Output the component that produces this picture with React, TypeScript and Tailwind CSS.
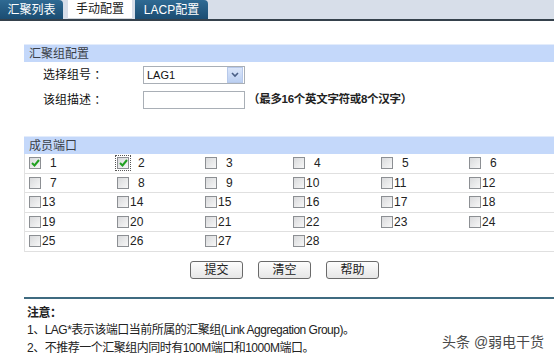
import React from "react";

const cjk = '"Liberation Sans", "Noto Sans CJK SC", sans-serif';

const Checkbox: React.FC<{ checked?: boolean; focused?: boolean }> = ({ checked, focused }) => {
	const box = (
		<span className="flex h-[12px] w-[12px] shrink-0 items-center justify-center border border-[#8c8f93] bg-gradient-to-br from-[#d9dadc] to-[#f7f7f7]">
			{checked && (
				<svg width="9" height="8" viewBox="0 0 9 8">
					<path d="M1 4 L3.5 6.5 L8 1" fill="none" stroke="#21a121" strokeWidth="2" />
				</svg>
			)}
		</span>
	);
	if (focused) {
		return <span className="-m-[2px] flex border border-dotted border-[#555] p-[1px]">{box}</span>;
	}
	return box;
};

const SectionHeader: React.FC<{ title: string }> = ({ title }) => (
	<div className="flex h-[18px] items-center border-t border-[#e3ecfb] bg-[#c4d8fa] pl-[5px] text-[12px] text-[#3a3f48]">
		{title}
	</div>
);

const Button: React.FC<{ label: string }> = ({ label }) => (
	<div className="flex h-[18px] w-[53px] items-center justify-center rounded-[3px] border border-[#6a6a6a] bg-gradient-to-b from-[#fdfdfd] to-[#e6e6e6] text-[12px] text-[#222]">
		{label}
	</div>
);

const ports = Array.from({ length: 28 }, (_, i) => i + 1);
const rows = [0, 1, 2, 3, 4].map((r) => ports.slice(r * 6, r * 6 + 6));

export default function App() {
	return (
		<div className="relative h-[360px] w-[554px] overflow-hidden bg-white" style={{ fontFamily: cjk }}>
			{/* tab bar */}
			<div className="flex h-[21px] items-start border-b-2 border-[#35414c] bg-[#d7dee9]">
				<div className="flex h-[19px] w-[63px] items-center justify-center rounded-tr-[4px] bg-gradient-to-b from-[#2f6a93] to-[#1b4d72] text-[12px] text-white">
					汇聚列表
				</div>
				<div className="ml-[5px] flex h-[19px] w-[64px] items-center justify-center border-b border-[#cfd4da] bg-white text-[12px] text-[#222]">
					手动配置
				</div>
				<div className="ml-[3px] flex h-[19px] w-[73px] items-center justify-center rounded-tr-[4px] bg-gradient-to-b from-[#2f6a93] to-[#1b4d72] text-[12px] text-white">
					LACP配置
				</div>
			</div>

			<div className="pl-[24px] pt-[23px]">
				<SectionHeader title="汇聚组配置" />

				<div className="flex flex-col gap-[7px] pt-[4px] text-[12px] text-[#111]">
					<div className="flex h-[18px] items-center">
						<span className="w-[119px] pl-[19px]">选择组号 ：</span>
						<div className="flex h-[18px] w-[102px] items-center justify-between border border-[#a9afb6] bg-white pl-[3px] pr-[1px]">
							<span className="text-[11px]">LAG1</span>
							<span className="flex h-[16px] w-[16px] items-center justify-center border border-[#b7c9ea] bg-gradient-to-b from-[#dbe6fa] to-[#bcd0f2]">
								<svg width="8" height="6" viewBox="0 0 8 6">
									<path d="M1 1 L4 4 L7 1" fill="none" stroke="#4a5f86" strokeWidth="1.6" />
								</svg>
							</span>
						</div>
					</div>
					<div className="flex h-[18px] items-center">
						<span className="w-[119px] pl-[19px]">该组描述 ：</span>
						<div className="h-[18px] w-[102px] border border-[#a9afb6] bg-white" />
						<span className="ml-[3px] font-semibold text-[11.5px] text-[#222] tracking-[-0.3px]">（最多16个英文字符或8个汉字）</span>
					</div>
				</div>

				<div className="mt-[27px]">
					<SectionHeader title="成员端口" />
					<div className="border-l border-[#e2e2e2] text-[12px] text-[#222]">
						{rows.map((row, r) => (
							<div key={r} className="flex h-[19.5px] items-center border-b border-[#e0e0e0]">
								{row.map((p) => (
									<div key={p} className="flex w-[88px] items-center pl-[4px]">
										<Checkbox checked={p <= 2} focused={p === 2} />
										<span className={p < 10 ? "ml-[9px]" : "ml-[1px]"}>{p}</span>
									</div>
								))}
							</div>
						))}
					</div>
				</div>

				<div className="mt-[9px] flex gap-[15px] pl-[166px]">
					<Button label="提交" />
					<Button label="清空" />
					<Button label="帮助" />
				</div>

				<div className="mt-[18px] h-[2px] bg-[#3f6b80]" />

				<div className="pl-[3px] pt-[6px] text-[12px] leading-[17.5px] text-[#222] tracking-[-0.5px]">
					<div className="font-bold">注意：</div>
					<div>1、LAG*表示该端口当前所属的汇聚组(Link Aggregation Group)。</div>
					<div>2、不推荐一个汇聚组内同时有100M端口和1000M端口。</div>
				</div>
			</div>

			<div className="absolute left-[442px] top-[332px] text-[14px] text-[#4a4a4a] [text-shadow:0_0_2px_#fff]">
				头条 @弱电干货
			</div>
		</div>
	);
}
